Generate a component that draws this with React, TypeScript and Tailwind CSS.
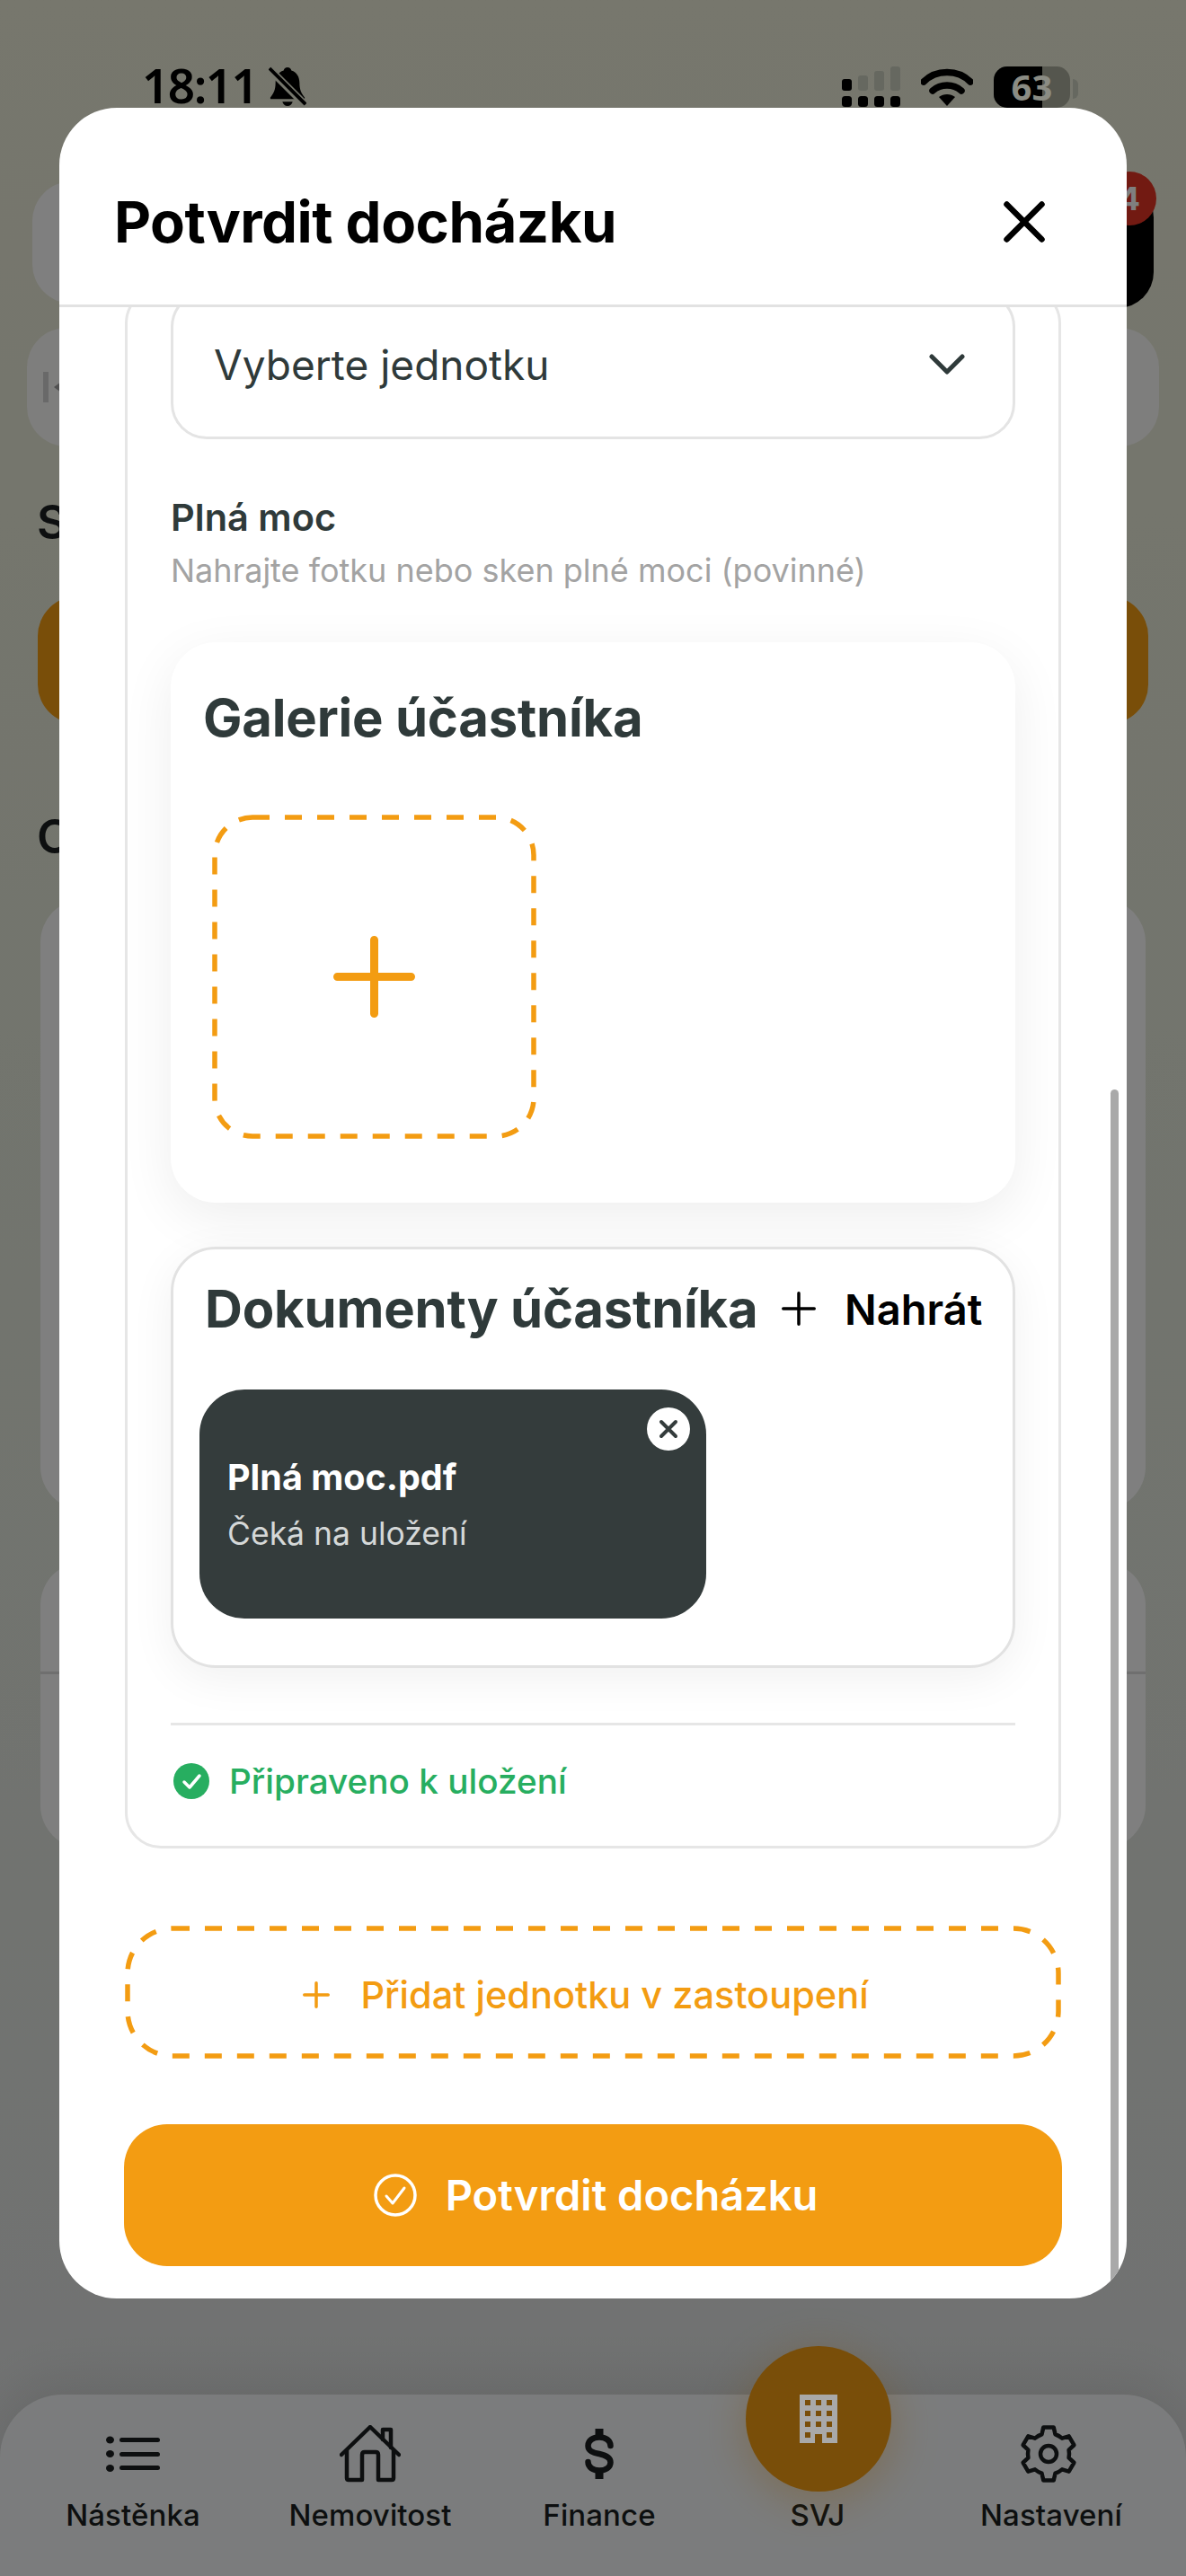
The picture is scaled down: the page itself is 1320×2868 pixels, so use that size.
import React from 'react';

const font = "font-['Inter','Noto_Sans',sans-serif]";

// six-tooth gear outline, built once from polar points
const gearPath = (() => {
  const pt = (deg: number, r: number) => {
    const a = (deg * Math.PI) / 180;
    return `${(32 + r * Math.cos(a)).toFixed(2)} ${(32 + r * Math.sin(a)).toFixed(2)}`;
  };
  let d = '';
  for (let i = 0; i < 6; i++) {
    const a = -90 + i * 60;
    d += `${i === 0 ? 'M' : 'A23 23 0 0 1 '}${pt(a - 19, 23)}L${pt(a - 11, 30)}L${pt(a + 11, 30)}L${pt(a + 19, 23)}`;
  }
  return `${d}A23 23 0 0 1 ${pt(-109, 23)}Z`;
})();

const StatusBar = () => (
  <div className="absolute inset-x-0 top-0 z-20">
    <div className="flex items-start justify-between pl-[158px] pr-[120px] pt-[64px]">
      <div className="flex items-start gap-[13px]">
        <span className="text-[53px] leading-[62px] font-semibold tracking-[-1.5px] text-black">18:11</span>
        <svg width="42" height="48" viewBox="0 0 44 48" className="mt-[9px]">
          <path d="M22 1c2.500 0 4 1.500 4.500 3.500C33 6.500 36 12 36 19c0 8 2 12 6 17v2H2v-2c4-5 6-9 6-17C8 12 11 6.500 17.500 4.500 18 2.500 19.500 1 22 1z" fill="#000" />
          <path d="M16 41h12c-1 3-3 5-6 5s-5-2-6-5z" fill="#000" />
          <path d="M1 3l42 42" stroke="#75766c" strokeWidth="9" />
          <path d="M1 2l42 42" stroke="#000" strokeWidth="4" />
        </svg>
      </div>
      <div className="flex items-start">
        <svg width="66" height="46" viewBox="0 0 66 46" className="mt-[10px]">
          <rect x="1" y="14" width="11" height="13" rx="3" fill="#000" />
          <rect x="19" y="10" width="11" height="17" rx="3" fill="#666860" />
          <rect x="37" y="5" width="11" height="22" rx="3" fill="#666860" />
          <rect x="55" y="0" width="11" height="27" rx="3" fill="#666860" />
          <rect x="1" y="33" width="11" height="12" rx="3.500" fill="#000" />
          <rect x="19" y="33" width="11" height="12" rx="3.500" fill="#000" />
          <rect x="37" y="33" width="11" height="12" rx="3.500" fill="#000" />
          <rect x="55" y="33" width="11" height="12" rx="3.500" fill="#000" />
        </svg>
        <svg width="58" height="42" viewBox="0 0 58 42" className="ml-[23px] mt-[12px]">
          <path d="M3 15C17 1 41 1 55 15" fill="none" stroke="#000" strokeWidth="7.500" strokeLinecap="round" />
          <path d="M13 25c9-8 23-8 32 0" fill="none" stroke="#000" strokeWidth="7.500" strokeLinecap="round" />
          <path d="M20 32c5-4 13-4 18 0L29 42z" fill="#000" />
        </svg>
        <div className="relative ml-[23px] mt-[10px] flex h-[46px] w-[85px] rounded-[15px] bg-[#55564e]">
          <div className="h-full w-[54px] rounded-l-[15px] bg-black" />
          <span className="absolute inset-0 flex items-center justify-center text-[40px] leading-none font-bold text-[#8b8c84]">63</span>
        </div>
        <div className="ml-[3px] mt-[24px] h-[22px] w-[6px] rounded-r-full bg-[#666860]" />
      </div>
    </div>
  </div>
);

interface NavItemProps {
  label: string;
  width: string;
  children?: React.ReactNode;
}

const NavItem = ({ label, width, children }: NavItemProps) => (
  <div className={`flex flex-col items-center pt-[32px] ${width}`}>
    <div className="flex h-[68px] items-center justify-center">{children}</div>
    <span className="mt-[14px] text-[33px] leading-[40px] font-medium tracking-[0.1px] text-[#1b1f20]">{label}</span>
  </div>
);

const PageBehind = () => (
  <div className={`flex h-full flex-col bg-gradient-to-b from-[#eeeeda] via-[#e4e9dc] to-[#e2e4e6] ${font}`}>
    <div className="mt-[202px] ml-[36px] flex w-[1248px] items-start justify-between">
      <div className="h-[136px] w-[1100px] rounded-[44px] bg-white" />
      <div className="relative h-[141px] w-[84px] rounded-[40px] bg-black">
        <span className="absolute -right-[3px] -top-[11px] flex h-[60px] w-[60px] items-center justify-center rounded-full bg-[#e53525] text-[36px] font-bold text-white">
          4
        </span>
      </div>
    </div>
    <div className="mt-[22px] ml-[30px] flex h-[132px] w-[1260px] items-center rounded-[44px] bg-[#fcfcfa] pl-[18px]">
      <svg width="20" height="34" viewBox="0 0 20 34">
        <rect x="0" y="0" width="6" height="34" fill="#d2d2d2" />
        <path d="M20 11v12l-8-6z" fill="#a0a0a0" />
      </svg>
    </div>
    <h2 className="mt-[55px] ml-[41px] text-[52px] leading-[60px] font-semibold text-[#1b1f20]">S</h2>
    <div className="mt-[52px] ml-[42px] h-[142px] w-[1236px] rounded-[44px] bg-[#f39c12]" />
    <h2 className="mt-[96px] ml-[41px] text-[52px] leading-[60px] font-semibold text-[#1b1f20]">O</h2>
    <div className="mt-[39px] ml-[45px] h-[680px] w-[1230px] rounded-[48px] bg-white" />
    <div className="mt-[58px] ml-[45px] w-[1230px] overflow-hidden rounded-[48px] bg-white">
      <div className="h-[125px] border-b-[3px] border-[#dedede]" />
      <div className="h-[194px]" />
    </div>
    <nav className="mt-auto flex h-[202px] rounded-t-[70px] bg-[#f7f9fa] pl-[16px] shadow-[0_-12px_60px_rgba(0,0,0,0.1)]">
      <NavItem label="Nástěnka" width="w-[264px]">
        <svg width="60" height="40" viewBox="0 0 60 40" fill="#1b1f20">
          <ellipse cx="4.500" cy="4.500" rx="4.500" ry="4" />
          <ellipse cx="4.500" cy="20" rx="4.500" ry="4" />
          <ellipse cx="4.500" cy="36" rx="4.500" ry="4" />
          <rect x="15" y="2" width="45" height="5" rx="2.500" />
          <rect x="15" y="18" width="45" height="5" rx="2.500" />
          <rect x="15" y="33" width="45" height="5" rx="2.500" />
        </svg>
      </NavItem>
      <NavItem label="Nemovitost" width="w-[264px]">
        <svg width="68" height="64" viewBox="0 0 68 64" fill="none" stroke="#1b1f20" strokeWidth="4.500" strokeLinecap="round" strokeLinejoin="round">
          <path d="M2 33L34 2l32 31" />
          <path d="M8 28v31c0 1.500 1 2 2 2h15V33c0-2 1-3 3-3h12c2 0 3 1 3 3v28h15c1 0 2-.5 2-2V28" />
          <path d="M48 16V5h9v20" />
        </svg>
      </NavItem>
      <NavItem label="Finance" width="w-[246px]">
        <svg width="32" height="56" viewBox="0 0 32 56" fill="none" stroke="#1b1f20">
          <path d="M16 0v11M16 45v11" strokeWidth="9" />
          <path d="M28.500 19C28.500 13 23 9.500 16 9.500S3.500 13 3.500 19 9 26.500 16 28s12.500 4 12.500 9.500S23 46.500 16 46.500 3.500 43 3.500 37" strokeWidth="6.500" strokeLinecap="round" />
        </svg>
      </NavItem>
      <NavItem label="SVJ" width="w-[240px]" />
      <NavItem label="Nastavení" width="w-[280px]">
        <svg width="64" height="64" viewBox="0 0 64 64" fill="none" stroke="#1b1f20" strokeWidth="4.500" strokeLinejoin="round" className="-ml-[6px]">
          <path d={gearPath} />
          <circle cx="32" cy="32" r="9" />
        </svg>
      </NavItem>
    </nav>
    <div className="absolute left-[830px] top-[2612px] flex h-[162px] w-[162px] items-center justify-center rounded-full bg-[#f39c12] shadow-[0_10px_50px_rgba(243,156,18,0.35)]">
      <svg width="42" height="54" viewBox="0 0 42 54" className="relative z-30">
        <path
          fillRule="evenodd"
          fill="#a9a9a9"
          d="M0 0h42v54H25V44h-8v10H0z M6 6v6h6V6z M18 6v6h6V6z M30 6v6h6V6z M6 18v6h6v-6z M18 18v6h6v-6z M30 18v6h6v-6z M6 30v6h6v-6z M18 30v6h6v-6z M30 30v6h6v-6z M6 42v6h6v-6z M30 42v6h6v-6z"
        />
      </svg>
    </div>
  </div>
);

const PlusIcon = ({ size, stroke, color }: { size: number; stroke: number; color: string }) => (
  <svg width={size} height={size} viewBox={`0 0 ${size} ${size}`} stroke={color} strokeWidth={stroke} strokeLinecap="round">
    <path d={`M${size / 2} ${stroke / 2}V${size - stroke / 2}M${stroke / 2} ${size / 2}H${size - stroke / 2}`} />
  </svg>
);

// browser dashed borders are too short here, so the dash is drawn
const DashedFrame = ({ width, height, radius }: { width: number; height: number; radius: number }) => (
  <svg width={width} height={height} className="pointer-events-none absolute left-0 top-0">
    <rect x="3" y="3" width={width - 6} height={height - 6} rx={radius} fill="none" stroke="#f39c12" strokeWidth="5.5" strokeDasharray="19 17" />
  </svg>
);

const Modal = () => (
  <div className={`flex h-[2439px] w-[1188px] flex-col overflow-hidden rounded-[64px] bg-white ${font}`}>
    <header className="flex h-[222px] shrink-0 items-center justify-between border-b-[3px] border-[#e2e2e2] pl-[61px] pr-[91px] pt-[34px]">
      <h1 className="text-[63.5px] leading-none font-bold tracking-[-0.5px] text-black">Potvrdit docházku</h1>
      <svg width="46" height="46" viewBox="0 0 46 46" stroke="#000" strokeWidth="6.500" strokeLinecap="round">
        <path d="M3.500 3.500l39 39M42.500 3.500l-39 39" />
      </svg>
    </header>

    <div className="relative flex min-h-0 flex-1 flex-col justify-end overflow-hidden px-[73px] pb-[36px]">
      {/* scrollbar */}
      <div className="absolute bottom-0 right-[9px] top-[871px] w-[9px] rounded-t-full bg-[#a9a9a9]" />

      <div className="rounded-[40px] border-[3px] border-[#e6e6e6] px-[48px] pb-[50px]">
        <div className="mb-[63px] mt-[1px] flex h-[165px] items-center justify-between rounded-[40px] border-[3px] border-[#e4e4e4] pb-[2px] pl-[45px] pr-[53px]">
          <span className="text-[46px] leading-none text-[#2f3a3a]">Vyberte jednotku</span>
          <svg width="40" height="24" viewBox="0 0 40 24" fill="none" stroke="#2f3a3a" strokeWidth="5" strokeLinecap="round" strokeLinejoin="round">
            <path d="M3 3l17 17L37 3" />
          </svg>
        </div>

        <div className="text-[41.5px] leading-[48px] font-semibold text-[#2f3a3a]">Plná moc</div>
        <div className="mt-[14px] text-[36px] leading-[42px] whitespace-nowrap text-[#a3a3a3]">Nahrajte fotku nebo sken plné moci (povinné)</div>

        <section className="mt-[59px] h-[624px] rounded-[50px] bg-white pl-[36px] pr-[36px] pt-[48px] shadow-[0_16px_60px_rgba(0,0,0,0.07)]">
          <h3 className="text-[58px] leading-[72px] font-bold tracking-[-0.2px] text-[#2f3a3a]">Galerie účastníka</h3>
          <div className="relative mt-[72px] ml-[10px] flex h-[361px] w-[361px] items-center justify-center">
            <DashedFrame width={361} height={361} radius={42} />
            <PlusIcon size={91} stroke={9} color="#f39c12" />
          </div>
        </section>

        <section className="mt-[49px] h-[469px] rounded-[50px] border-[3px] border-[#e2e2e2] bg-white pl-[29px] shadow-[0_12px_50px_rgba(0,0,0,0.06)]">
          <div className="flex h-[132px] items-center pl-[6px]">
            <h3 className="w-[613px] text-[58px] leading-none font-bold tracking-[-0.2px] whitespace-nowrap text-[#2f3a3a]">Dokumenty účastníka</h3>
            <div className="ml-[29px]">
              <PlusIcon size={38} stroke={3.5} color="#000" />
            </div>
            <span className="ml-[32px] text-[47px] leading-none font-semibold text-black">Nahrát</span>
          </div>
          <div className="relative mt-[24px] flex h-[255px] w-[564px] flex-col rounded-[50px] bg-[#343c3c] pl-[31px] pt-[73px]">
            <span className="absolute right-[18px] top-[20px] flex h-[48px] w-[48px] items-center justify-center rounded-full bg-white">
              <svg width="22" height="22" viewBox="0 0 22 22" stroke="#343c3c" strokeWidth="4" strokeLinecap="round">
                <path d="M3 3l16 16M19 3L3 19" />
              </svg>
            </span>
            <span className="text-[39.5px] leading-[50px] font-bold text-white">Plná moc.pdf</span>
            <span className="mt-[13px] text-[35.5px] leading-[50px] text-[#d5d8d8]">Čeká na uložení</span>
          </div>
        </section>

        <div className="mt-[61px] border-t-[3px] border-[#e6e6e6] pt-[40px]">
          <div className="flex h-[44px] items-center pl-[3px]">
            <svg width="40" height="40" viewBox="0 0 40 40">
              <circle cx="20" cy="20" r="20" fill="#27ae60" />
              <path d="M12 21l6 6 11-13" fill="none" stroke="#fff" strokeWidth="3.500" strokeLinecap="round" strokeLinejoin="round" />
            </svg>
            <span className="ml-[22px] text-[38.7px] leading-none font-medium text-[#27ae60]">Připraveno k uložení</span>
          </div>
        </div>
      </div>

      <button className="relative mt-[86px] flex h-[148px] shrink-0 items-center justify-center pr-[16px] pt-[6px] text-[41.5px] font-medium text-[#f39c12]">
        <DashedFrame width={1042} height={148} radius={50} />
        <PlusIcon size={30} stroke={3.5} color="#f39c12" />
        <span className="ml-[34px]">Přidat jednotku v zastoupení</span>
      </button>

      <button className="-mx-[1px] mt-[73px] flex h-[158px] shrink-0 items-center justify-center rounded-[48px] bg-[#f39c12] pl-[6px] text-[47px] font-semibold text-white">
        <svg width="48" height="48" viewBox="0 0 48 48" fill="none" stroke="#fff">
          <circle cx="24" cy="24" r="22" strokeWidth="3.500" />
          <path d="M14 25l7 8 13-17" strokeWidth="3" strokeLinecap="round" strokeLinejoin="round" />
        </svg>
        <span className="ml-[32px]">Potvrdit docházku</span>
      </button>
    </div>
  </div>
);

export default function App() {
  return (
    <div className="relative h-[2868px] w-[1320px] overflow-hidden">
      <PageBehind />
      <div className="absolute inset-0 z-10 bg-black/50" />
      <StatusBar />
      <div className="absolute inset-0 z-40 pl-[66px] pt-[120px]">
        <Modal />
      </div>
    </div>
  );
}
